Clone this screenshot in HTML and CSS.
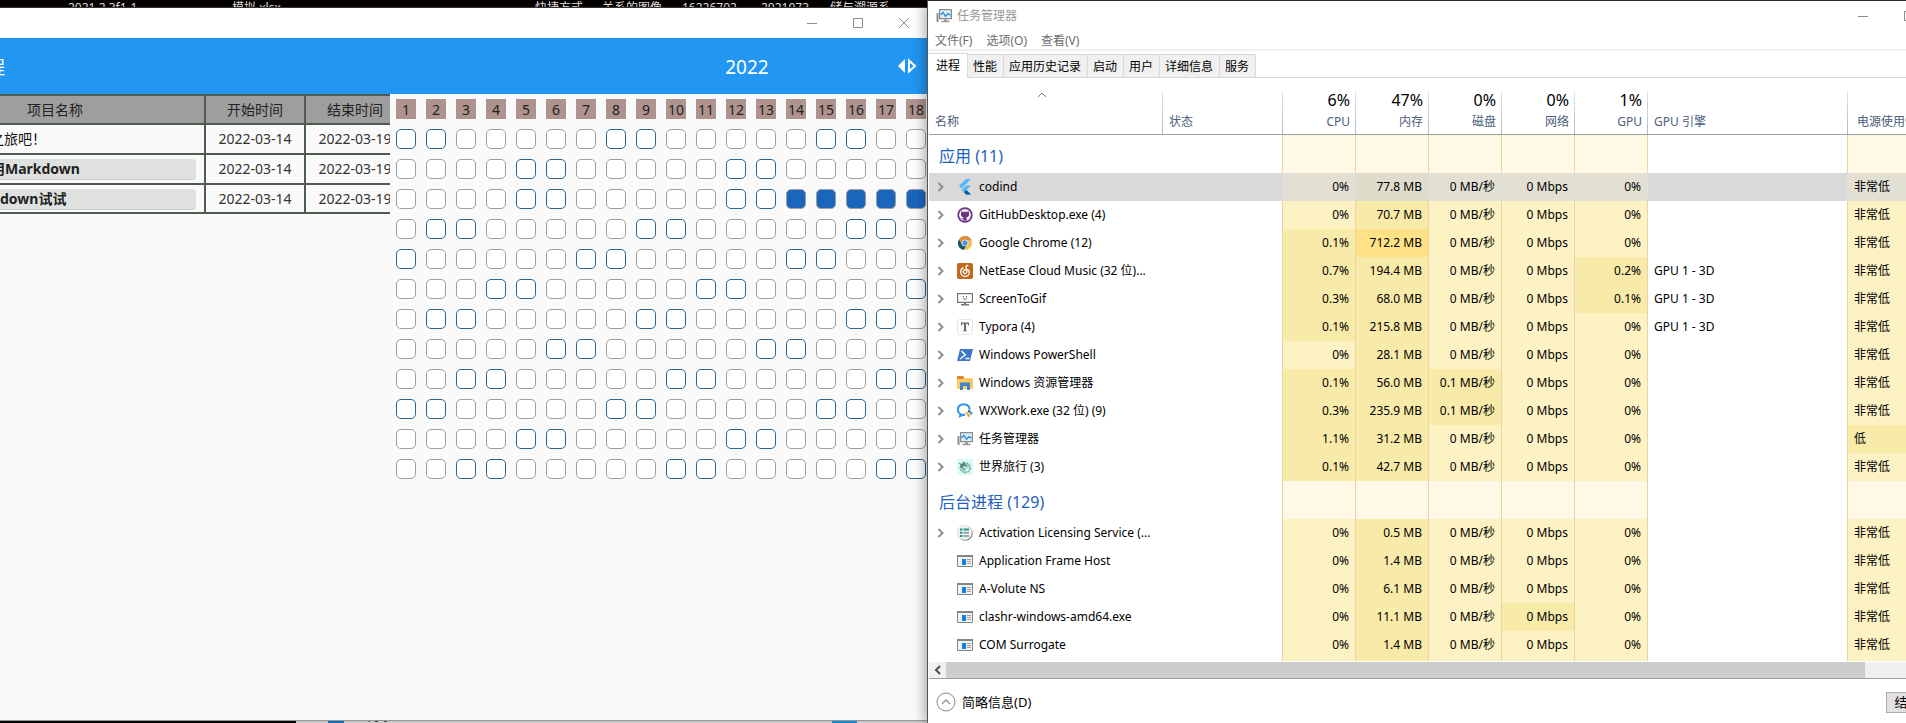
FILE: index.html
```
<!DOCTYPE html>
<html lang="zh-CN">
<head>
<meta charset="utf-8">
<title>任务管理器</title>
<link rel="stylesheet" href="styles.css">
</head>
<body>
<svg class="sprite" aria-hidden="true">
  <symbol id="i-flutter" viewBox="0 0 16 16"><path d="M9 0h5L4.500 9.500 2 7z" fill="#54b4f5"/><path d="M9 6.500h5L9.500 11 14 15.500H9L4.500 11z" fill="#54b4f5"/><path d="M7 13.300 9.400 11l4.600 4.500H9z" fill="#0f5c9c"/></symbol>
  <symbol id="i-github" viewBox="0 0 16 16"><circle cx="8" cy="8" r="7.700" fill="#6b3286"/><circle cx="8" cy="8" r="5.900" fill="#fff"/><path d="M4.400 4l1.900 1q1.700-.5 3.400 0l1.900-1 .3 2.400q1 3.200-2.600 3.900.6.700.5 3.200H6.200v-1.200q-1.500.3-2.300-1.400 1.200 0 1.600.5l.8-.1q0-.6.4-1-3.500-.700-2.600-3.900z" fill="#6b3286"/></symbol>
  <symbol id="i-chrome" viewBox="0 0 16 16"><circle cx="8" cy="8" r="7" fill="#f6c04c"/><path d="M2 4.500A7 7 0 0 1 14.500 5.200H8L5 9z" fill="#e08a3c"/><path d="M2 4.500 5.200 10 9 11l-2.500 4A7 7 0 0 1 2 4.500z" fill="#175a70"/><circle cx="8" cy="8" r="3.300" fill="#fff"/><circle cx="8" cy="8" r="2.700" fill="#4a94e8"/></symbol>
  <symbol id="i-netease" viewBox="0 0 16 16"><rect width="16" height="16" rx="2" fill="#c4681c"/><path d="M11.300 3Q9.400 1.700 9 3.700L9.800 9a1.800 1.800 0 1 1-3.200-1.400Q7.600 6.200 9.800 6.300q2.500.5 2.500 3A4.300 4.300 0 0 1 3.700 9.100Q3.600 6 6.500 4.700" fill="none" stroke="#fff" stroke-width="1.300"/></symbol>
  <symbol id="i-screen" viewBox="0 0 16 16"><path d="M.6 2.600h14.800v8.800H.6z" fill="#fff" stroke="#727a7a" stroke-width="1.200"/><path d="M7 11.500h2V14H7zM4 13h8v1.500H4z" fill="#727a7a"/><path d="M6 5h1v1.300H6zM9 5h1v1.300H9z" fill="#555"/><path d="M6 7.500q2 1.700 4 0" fill="none" stroke="#555" stroke-width=".8"/></symbol>
  <symbol id="i-typora" viewBox="0 0 16 16"><rect x=".5" y=".5" width="15" height="15" rx="2.500" fill="#fdfdfd" stroke="#e6e6e6"/><path d="M4 3.500h8v3h-.8L10.500 4.800H9v6.400l1 .5v.6H6v-.6l1-.5V4.800H5.500L4.800 6.500H4z" fill="#666"/></symbol>
  <symbol id="i-ps" viewBox="0 0 16 16"><path d="M3 2h13l-3 12H0z" fill="#3f78c8"/><path d="M4.500 4 8.300 8 3 12M8.500 11.500h4" fill="none" stroke="#fff" stroke-width="1.500"/></symbol>
  <symbol id="i-folder" viewBox="0 0 16 16"><path d="M0 1h6l1.500 2H16v11H0z" fill="#fbcb62"/><path d="M0 1h6l1.500 2L6 4H0z" fill="#dc8a36"/><path d="M3 7.500h10V15h-3v-4H6v4H3z" fill="#3a86d0"/></symbol>
  <symbol id="i-wx" viewBox="0 0 16 16"><path d="M12.700 6.500A6 5.300 0 1 0 3.500 11L3 13l3-1.200 2 .2" fill="none" stroke="#2a94ee" stroke-width="2"/><path d="M12 6.500l1.800 2L12 10l-1.500-1.500z" fill="#4e565e"/><path d="M14 8.500l2 1.700-2 1.600-1.500-1.600z" fill="#2a8fe0"/><path d="M11.500 10.500l2 1.800-1.500 2.200-2.200-2z" fill="#e9a33a"/><path d="M9.800 8.700l1.600 1.800-1.600 1.500-1.500-1.600z" fill="#e9a33a"/></symbol>
  <symbol id="i-task" viewBox="0 0 16 16"><path d="M.5 5h2v9h-2z" fill="#8c8c8c"/><path d="M3.600 1.700h11.800v9H3.600z" fill="#d9effb" stroke="#8c8c8c" stroke-width="1.200"/><path d="M4.500 6.800 7 4.500l2.500 3.800L12 5.500l2.500 1.800" fill="none" stroke="#2784cc" stroke-width="1.300"/><path d="M8 11.300h3v1.500H8zM5.500 12.800h8v1.500h-8z" fill="#9a9a9a"/></symbol>
  <symbol id="i-travel" viewBox="0 0 16 16"><path d="M0 0h16v16H0z" fill="#dafaf6"/><circle cx="8.500" cy="8.800" r="5" fill="#a8d6c8" stroke="#4f8f80" stroke-dasharray="2 1"/><path d="M1.500 3.500 5 5l2-3 .8 3.500 3 .5-3 1.800-.5 3.500L5 8.500 2 9l1.700-2.500z" fill="#57867c"/><path d="M6 7.500h2v1.500H6zM9 9.500h2.500V12H9z" fill="#e5fff8"/></symbol>
  <symbol id="i-license" viewBox="0 0 16 16"><circle cx="8.300" cy="8.300" r="7.500" fill="#777"/><circle cx="7.600" cy="7.600" r="7.300" fill="#f1f3f2" stroke="#ccc" stroke-width=".6"/><path d="M3 3.500h2.500v2H3zM6.500 3.500H12v2H6.500zM3 6.700h2.500v2H3zM3 9.900h2.500v2H3z" fill="#2e9490"/><path d="M6.500 6.700H12v2H6.500zM6.500 9.900H12v2H6.500z" fill="#9aa9aa"/></symbol>
  <symbol id="i-app" viewBox="0 0 16 16"><path d="M.5 2.500h15v11H.5z" fill="#f4f4f4" stroke="#858585"/><path d="M0 2h16v2H0z" fill="#858585"/><path d="M5 6h4v6H5z" fill="#1480dc"/><path d="M10 6.500h4M10 8.500h4M10 10.500h4" stroke="#999"/></symbol>
  <symbol id="i-min" viewBox="0 0 10 10"><path d="M0 5.500h10" stroke="#8c8c8c" fill="none"/></symbol>
  <symbol id="i-max" viewBox="0 0 10 10"><path d="M.5.5h9v9h-9z" stroke="#8c8c8c" fill="none"/></symbol>
  <symbol id="i-close" viewBox="0 0 10 10"><path d="M0 0l10 10M10 0L0 10" stroke="#8c8c8c" fill="none"/></symbol>
  <symbol id="i-right" viewBox="0 0 8 10"><path d="M1.500 1l4 4-4 4" stroke="#8e8e8e" stroke-width="2" fill="none"/></symbol>
</svg>

<main class="desktop">
  <section class="left">
    <div class="wallpaper">
      <span class="file f1">2021.2.3f1-1</span>
      <span class="file f2">模拟.xlsx</span>
      <span class="file f3">快捷方式</span>
      <span class="file f4">关系的图像</span>
      <span class="file f5">16226702</span>
      <span class="file f6">2021073</span>
      <span class="file f7">储与溯源系</span>
    </div>
    <div class="calendar-app">
      <header class="caption">
        <button class="cap-btn" aria-label="最小化"><svg width="10" height="10"><use href="#i-min"/></svg></button>
        <button class="cap-btn" aria-label="最大化"><svg width="10" height="10"><use href="#i-max"/></svg></button>
        <button class="cap-btn" aria-label="关闭"><svg width="10" height="10"><use href="#i-close"/></svg></button>
      </header>
      <div class="appbar">
        <span class="app-title">程</span>
        <span class="year">2022</span>
        <button class="range" aria-label="切换年份"><svg width="20" height="16" viewBox="0 0 20 16"><path d="M8 1v14L1 8z" fill="#fff"/><path d="M12 2.500v11L18 8z" fill="none" stroke="#fff" stroke-width="2"/></svg></button>
      </div>
      <div class="work">
        <div class="projects">
          <table class="plan">
            <colgroup><col class="p-name"><col class="p-date"><col class="p-date"></colgroup>
            <thead><tr><th class="name-head">项目名称</th><th>开始时间</th><th>结束时间</th></tr></thead>
            <tbody>
              <tr><td class="name plain">之旅吧！</td><td>2022-03-14</td><td>2022-03-19</td></tr>
              <tr><td class="name"><span class="chip">用Markdown</span></td><td>2022-03-14</td><td>2022-03-19</td></tr>
              <tr><td class="name"><span class="chip inset">down试试</span></td><td>2022-03-14</td><td>2022-03-19</td></tr>
            </tbody>
          </table>
        </div>
        <div class="days" id="days"></div>
      </div>
    </div>
    <div class="taskbar"><i class="dark"></i><i class="icon"></i><span class="task-name">3D 对象</span><i class="accent"></i></div>
  </section>

  <section class="right">
    <div class="manager">
      <header class="m-title">
        <svg width="16" height="16"><use href="#i-task"/></svg>
        <h1>任务管理器</h1>
        <button class="cap-btn" aria-label="最小化"><svg width="10" height="10"><use href="#i-min"/></svg></button>
        <button class="cap-btn" aria-label="最大化"><svg width="10" height="10"><use href="#i-max"/></svg></button>
        <button class="cap-btn" aria-label="关闭"><svg width="10" height="10"><use href="#i-close"/></svg></button>
      </header>
      <nav class="menu"><button>文件(F)</button><button>选项(O)</button><button>查看(V)</button></nav>
      <div class="tabs" role="tablist">
        <button role="tab" aria-selected="true" class="tab on">进程</button><button role="tab" class="tab">性能</button><button role="tab" class="tab">应用历史记录</button><button role="tab" class="tab">启动</button><button role="tab" class="tab">用户</button><button role="tab" class="tab">详细信息</button><button role="tab" class="tab">服务</button>
      </div>
      <div class="pane">
        <table class="procs">
          <colgroup><col class="c-name"><col class="c-state"><col class="c-num"><col class="c-num"><col class="c-num"><col class="c-num"><col class="c-num"><col class="c-engine"><col class="c-power"></colgroup>
          <thead>
            <tr>
              <th><svg class="sort" width="10" height="6" viewBox="0 0 10 6"><path d="M1 5l4-4 4 4" fill="none" stroke="#777"/></svg><span>名称</span></th>
              <th><span>状态</span></th>
              <th class="num"><b>6%</b><span>CPU</span></th>
              <th class="num"><b>47%</b><span>内存</span></th>
              <th class="num"><b>0%</b><span>磁盘</span></th>
              <th class="num"><b>0%</b><span>网络</span></th>
              <th class="num"><b>1%</b><span>GPU</span></th>
              <th><span>GPU 引擎</span></th>
              <th class="power"><span>电源使用情况</span></th>
            </tr>
          </thead>
          <tbody id="procs"></tbody>
        </table>
      </div>
      <div class="hscroll">
        <button aria-label="向左滚动"><svg width="8" height="10" viewBox="0 0 8 10"><path d="M6 1L2 5l4 4" stroke="#505050" stroke-width="2" fill="none"/></svg></button>
        <div class="thumb"></div>
      </div>
      <footer class="m-foot">
        <button class="brief"><svg width="20" height="20" viewBox="0 0 20 20"><circle cx="10" cy="10" r="9" fill="none" stroke="#8a8a8a"/><path d="M6 12l4-4 4 4" fill="none" stroke="#999" stroke-width="1.500"/></svg>简略信息(D)</button>
        <button class="end">结束任务(E)</button>
      </footer>
    </div>
  </section>
</main>
<script src="app.js"></script>
</body>
</html>
```

FILE: styles.css
```
* { box-sizing: border-box; }
body {
  margin: 0;
  overflow: hidden;
  font: 12px/16px "Noto Sans", "Noto Sans CJK SC", sans-serif;
  color: #000;
}
button { font: inherit; color: inherit; border: 0; padding: 0; background: none; }
table { border-collapse: collapse; table-layout: fixed; }
th { font-weight: 400; }
svg { display: block; flex: none; }
.sprite { position: absolute; width: 0; height: 0; }

.desktop {
  display: grid;
  grid-template-columns: 927fr 979fr;
  height: 100vh;
  overflow: hidden;
}
.left { display: flex; flex-direction: column; min-width: 0; overflow: hidden; }
.wallpaper { position: relative; height: 8px; overflow: hidden; background: #050000; border-bottom: 1px solid #333; }
.file { position: absolute; top: 0; color: #ddd; white-space: nowrap; }
.f1 { left: 68px; } .f2 { left: 232px; } .f3 { left: 535px; } .f4 { left: 602px; }
.f5 { left: 682px; } .f6 { left: 761px; } .f7 { left: 830px; }

.calendar-app { flex: 1; min-height: 0; display: flex; flex-direction: column; background: #fafafa; }
.caption { display: flex; justify-content: flex-end; height: 30px; background: #fff; }
.cap-btn { display: grid; place-items: center; width: 46px; flex: none; }
.appbar { display: flex; align-items: center; height: 56px; padding-right: 10px; background: #2196f3; color: #fff; font-size: 18px; line-height: 24px; }
.app-title { margin-left: -13px; margin-right: auto; padding-top: 2px; }
.year { width: 300px; padding-top: 2px; text-align: center; font-size: 19px; }
.work { flex: 1; display: flex; min-height: 0; }
.projects { width: 390px; flex: none; overflow: hidden; font-size: 14px; line-height: 20px; color: #222; }
.plan { width: 418px; margin-left: -14px; }
.p-name { width: 218px; }
.p-date { width: 100px; }
.plan th, .plan td { height: 30px; padding: 0; border: 2px solid #4f5b4f; text-align: center; white-space: nowrap; }
.plan th { height: 29px; background: #9e9e9e; }
.plan tbody tr:last-child td { height: 29px; }
.plan .name-head { padding-left: 39px; text-align: left; }
.plan td { color: #333; }
.plan td.name { text-align: left; color: #111; }
.plan td.plain { padding-left: 2px; text-spacing-trim: space-all; }
.chip { display: block; margin-right: 8px; padding-left: 3px; border-radius: 4px; background: #dfe1e0; box-shadow: 0 1px #cfd1d0; font-weight: 700; color: #222; }
.chip.inset { padding-left: 12px; }

.days {
  flex: 1;
  min-width: 0;
  overflow: hidden;
  display: grid;
  grid-template-columns: repeat(18, 20px);
  grid-auto-rows: 20px;
  gap: 10px;
  padding: 5px 0 0 6px;
  align-content: start;
}
.day-no { background: #ae938e; color: #222; font-size: 14px; line-height: 22px; text-align: center; }
.day { appearance: none; width: 20px; height: 20px; margin: 0; border: 1px solid #9e9e9e; border-radius: 5px; background: #fff; }
.day.weekend { border-color: #2b648f; }
.day:checked { background: #1b66bd; }

.taskbar { display: flex; height: 3px; background: #c9c9c9; border-top: 1px solid #999; overflow: hidden; }
.taskbar i { height: 2px; flex: none; }
.dark { width: 296px; background: #000; }
.icon { width: 16px; margin-left: 32px; background: #1272b8; }
.task-name { width: 60px; margin: -12px 0 0 5px; flex: none; color: #111; }
.accent { width: 25px; margin-left: 423px; background: #1b86d6; }

.right { min-width: 0; position: relative; box-shadow: -2px 0 12px rgba(0, 0, 0, .35); }
.manager {
  display: flex;
  flex-direction: column;
  width: calc(100% + 72px);
  height: 100vh;
  border-top: 1px solid #2e2629;
  border-left: 1px solid #555;
  background: #fff;
}
.m-title { display: flex; height: 30px; padding-left: 8px; align-items: center; color: #999; }
.m-title h1 { flex: 1; margin: 0 0 0 5px; font-size: 12px; font-weight: 400; }
.m-title .cap-btn { height: 28px; }
.menu { display: flex; gap: 14px; height: 20px; padding: 2px 7px 0; border-bottom: 2px solid #f0f0f0; color: #6d6d6d; }
.tabs { display: flex; align-items: flex-end; height: 27px; border-bottom: 1px solid #d9d9d9; }
.tab { height: 23px; padding: 1px 6px 0 5px; border: 1px solid #d9d9d9; border-left-width: 0; border-bottom: 0; background: #f0f0f0; white-space: nowrap; }
.tab.on { height: 25px; padding: 0 7px 1px 8px; background: #fff; margin-bottom: -1px; }

.pane { flex: 1; min-height: 0; overflow: hidden; padding-left: 1px; }
.procs { width: 1039px; border-collapse: separate; border-spacing: 0; }
.c-name { width: 234px; } .c-state { width: 120px; } .c-num { width: 73px; }
.c-engine { width: 200px; } .c-power { width: 120px; }
.procs th {
  position: relative;
  height: 57px;
  padding: 0 6px 4px;
  vertical-align: bottom;
  text-align: left;
  color: #4b607a;
  border-bottom: 1px solid #a0a0a0;
  background: linear-gradient(#e6e6e6, #b4b8be) right bottom / 1px 43px no-repeat;
}
.procs th.num { text-align: right; }
.procs th.power { padding-left: 9px; }
.procs th b { display: block; padding-bottom: 2px; font-size: 16px; line-height: 24px; font-weight: 400; color: #000; }
.procs th span { display: block; }
.sort { position: absolute; left: 108px; top: 14px; }
.procs td { height: 28px; padding: 0 6px; white-space: nowrap; }
.procs td.heat { background: #fdf2c3; border-right: 1px solid #ecd3a0; text-align: right; }
.procs td.state { border-right: 1px solid #ecd3a0; }
.procs td.engine { border-right: 1px solid #ecd3a0; }
.procs td.heat.power { text-align: left; }
.procs td.heat.mid { background: #f8eaa8; }
.procs td.heat.high { background: #ffe287; }
.procs .group td { height: 38px; }
.procs .group td.heat { background: #fff8e6; }
.procs .group td:first-child { padding: 4px 10px 0; font-size: 16px; line-height: 20px; color: #1c5fbf; }
.procs .picked td { background: #d9d9d9; border-color: #e0e0e0; }
.procs .picked td.heat { background: #e2dfd3; border-color: #e0e0e0; }
.procs .picked td.heat.mid { background: #dfdccc; }
.proc { display: flex; align-items: center; }
.expand { width: 8px; margin: 0 12px 0 2px; }
.proc .label { margin-left: 6px; }

.hscroll { display: flex; height: 17px; margin-left: 1px; border-top: 1px solid #fff; background: #f0f0f0; }
.hscroll button { display: grid; place-items: center; width: 17px; }
.thumb { flex: 1; margin-right: 113px; background: #cdcdcd; }
.m-foot { display: flex; justify-content: space-between; align-items: center; height: 45px; margin-left: 1px; padding: 2px 8px 0 7px; border-top: 1px solid #a0a0a0; font-size: 13px; }
.brief { display: flex; align-items: center; gap: 6px; }
.end { width: 84px; height: 21px; border: 1px solid #adadad; background: #e1e1e1; }
```

FILE: app.js
```
const days = document.getElementById('days');
for (let d = 1; d <= 18; d++) {
  const head = document.createElement('span');
  head.className = 'day-no';
  head.textContent = d;
  days.append(head);
}
for (let m = 0; m < 12; m++) {
  for (let d = 1; d <= 18; d++) {
    const box = document.createElement('input');
    box.type = 'checkbox';
    box.setAttribute('aria-label', (m + 1) + '月' + d + '日');
    const weekday = new Date(2022, m, d).getDay();
    box.className = 'day' + (weekday % 6 === 0 ? ' weekend' : '');
    box.checked = m === 2 && d >= 14;
    days.append(box);
  }
}

// name, icon, expandable, [cpu, memory, disk, network, gpu], engine, power; "*" = warm cell, "!" = hot cell
const rows = [
  ['应用 (11)'],
  ['codind', 'flutter', 1, ['0%', '77.8 MB*', '0', '0', '0%'], '', '非常低'],
  ['GitHubDesktop.exe (4)', 'github', 1, ['0%', '70.7 MB*', '0', '0', '0%'], '', '非常低'],
  ['Google Chrome (12)', 'chrome', 1, ['0.1%*', '712.2 MB!', '0', '0', '0%'], '', '非常低'],
  ['NetEase Cloud Music (32 位)...', 'netease', 1, ['0.7%*', '194.4 MB*', '0', '0', '0.2%*'], 'GPU 1 - 3D', '非常低'],
  ['ScreenToGif', 'screen', 1, ['0.3%*', '68.0 MB*', '0', '0', '0.1%*'], 'GPU 1 - 3D', '非常低'],
  ['Typora (4)', 'typora', 1, ['0.1%*', '215.8 MB*', '0', '0', '0%'], 'GPU 1 - 3D', '非常低'],
  ['Windows PowerShell', 'ps', 1, ['0%', '28.1 MB*', '0', '0', '0%'], '', '非常低'],
  ['Windows 资源管理器', 'folder', 1, ['0.1%*', '56.0 MB*', '0.1*', '0', '0%'], '', '非常低'],
  ['WXWork.exe (32 位) (9)', 'wx', 1, ['0.3%*', '235.9 MB*', '0.1*', '0', '0%'], '', '非常低'],
  ['任务管理器', 'task', 1, ['1.1%*', '31.2 MB*', '0', '0', '0%'], '', '低*'],
  ['世界旅行 (3)', 'travel', 1, ['0.1%*', '42.7 MB*', '0', '0', '0%'], '', '非常低'],
  ['后台进程 (129)'],
  ['Activation Licensing Service (...', 'license', 1, ['0%', '0.5 MB*', '0', '0', '0%'], '', '非常低'],
  ['Application Frame Host', 'app', 0, ['0%', '1.4 MB*', '0', '0', '0%'], '', '非常低'],
  ['A-Volute NS', 'app', 0, ['0%', '6.1 MB*', '0', '0', '0%'], '', '非常低'],
  ['clashr-windows-amd64.exe', 'app', 0, ['0%', '11.1 MB*', '0', '0*', '0%'], '', '非常低'],
  ['COM Surrogate', 'app', 0, ['0%', '1.4 MB*', '0', '0', '0%'], '', '非常低'],
  ['', '', 0, ['', '*', '', '', ''], '', '']
];
const units = ['', '', ' MB/秒', ' Mbps', ''];

function heat(value, unit, extra) {
  const level = value.endsWith('*') ? ' mid' : value.endsWith('!') ? ' high' : '';
  const text = value.replace(/[*!]$/, '');
  return `<td class="heat${level}${extra}">${text && text + unit}</td>`;
}

document.getElementById('procs').innerHTML = rows.map(([name, icon, open, nums, engine, power]) => {
  const group = nums === undefined;
  const values = nums || ['', '', '', '', ''];
  const chevron = open
    ? '<button class="expand" aria-label="展开"><svg width="8" height="10"><use href="#i-right"/></svg></button>'
    : '<span class="expand"></span>';
  const first = group ? name : name &&
    `<div class="proc">${chevron}<svg width="16" height="16"><use href="#i-${icon}"/></svg><span class="label">${name}</span></div>`;
  const cls = group ? 'group' : name === 'codind' ? 'picked' : '';
  return `<tr class="${cls}"><td>${first}</td><td class="state"></td>` +
    values.map((v, i) => heat(v, units[i], '')).join('') +
    `<td class="engine">${engine || ''}</td>${heat(power || '', '', ' power')}</tr>`;
}).join('');
```
